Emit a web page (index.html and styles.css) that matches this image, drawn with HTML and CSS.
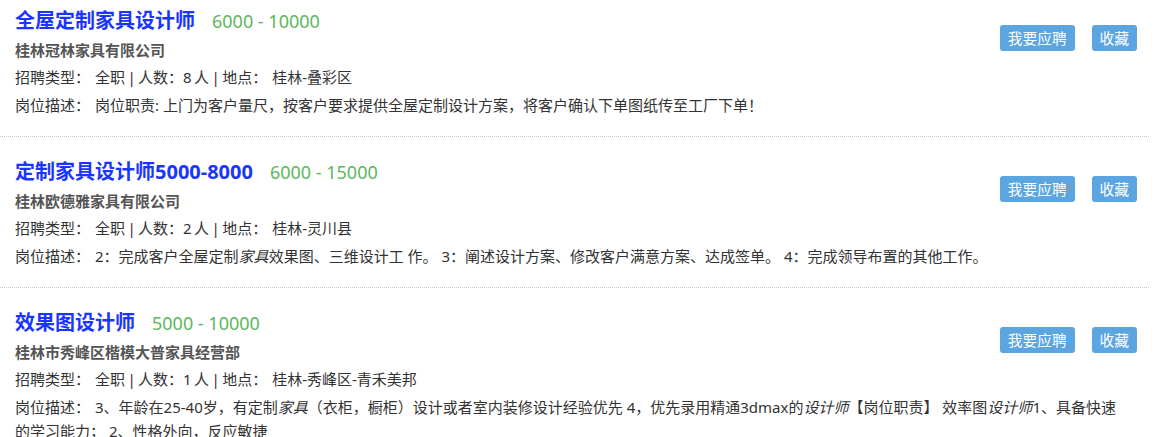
FILE: index.html
```html
<!DOCTYPE html>
<html lang="zh-CN">
<head>
    <meta charset="UTF-8">
    <meta name="viewport" content="width=device-width, initial-scale=1.0">
    <title>职位列表</title>
    <link rel="stylesheet" href="styles.css">
</head>
<body>
    <div class="job-list">
        <div class="job">
            <div class="job-btns">
                <button class="btn">我要应聘</button>
                <button class="btn">收藏</button>
            </div>
            <h2 class="job-title"><a href="#">全屋定制家具设计师</a><span class="salary">6000 - 10000</span></h2>
            <p class="company">桂林冠林家具有限公司</p>
            <p class="info"><span class="label">招聘类型：</span>全职 | 人数：8 人 | 地点：<span class="gap"></span>桂林-叠彩区</p>
            <p class="desc"><span class="label">岗位描述：</span>岗位职责: 上门为客户量尺，按客户要求提供全屋定制设计方案，将客户确认下单图纸传至工厂下单！</p>
        </div>

        <div class="job">
            <div class="job-btns">
                <button class="btn">我要应聘</button>
                <button class="btn">收藏</button>
            </div>
            <h2 class="job-title"><a href="#">定制家具设计师5000-8000</a><span class="salary">6000 - 15000</span></h2>
            <p class="company">桂林欧德雅家具有限公司</p>
            <p class="info"><span class="label">招聘类型：</span>全职 | 人数：2 人 | 地点：<span class="gap"></span>桂林-灵川县</p>
            <p class="desc"><span class="label">岗位描述：</span>2：完成客户全屋定制<em>家具</em>效果图、三维设计工 作。 3：阐述设计方案、修改客户满意方案、达成签单。 4：完成领导布置的其他工作。</p>
        </div>

        <div class="job">
            <div class="job-btns">
                <button class="btn">我要应聘</button>
                <button class="btn">收藏</button>
            </div>
            <h2 class="job-title"><a href="#">效果图设计师</a><span class="salary">5000 - 10000</span></h2>
            <p class="company">桂林市秀峰区楷模大普家具经营部</p>
            <p class="info"><span class="label">招聘类型：</span>全职 | 人数：1 人 | 地点：<span class="gap"></span>桂林-秀峰区-青禾美邦</p>
            <p class="desc"><span class="label">岗位描述：</span>3、年龄在25-40岁，有定制<em>家具</em>（衣柜，橱柜）设计或者室内装修设计经验优先 4，优先录用精通3dmax的<em>设计师</em>【岗位职责】 效率图<em>设计师</em>1、具备快速的学习能力； 2、性格外向，反应敏捷</p>
        </div>
    </div>
</body>
</html>
```

FILE: styles.css
```css
body { margin: 0; font-family: "Noto Sans", "Noto Sans CJK SC", "Microsoft YaHei", sans-serif; background: #fff; color: #333; }
.job-list { width: 1149px; }
.job { padding: 20px 12px 19px 15px; border-bottom: 1px dotted #c8c8c8; }
.job:first-child { padding-top: 6px; }
.job p { margin: 0; font-size: 15px; }

.job-title { margin: 0; font-size: 20px; line-height: 30px; font-weight: bold; }
.job-title a { color: #1a35ff; text-decoration: none; }
.salary { margin-left: 17px; font-size: 18px; font-weight: normal; color: #5cb85c; }

.company { line-height: 28px; font-weight: bold; color: #555; }
.info { line-height: 27px; word-spacing: -1.5px; }
.desc { margin: 2px 8px 0 0 !important; line-height: 24px; }
.desc em { font-style: italic; }
.label { margin-right: 5px; }
.gap { display: inline-block; width: 5px; }

.job-btns { float: right; margin-top: 19px; display: flex; gap: 17px; }
.btn {
    height: 26px;
    padding: 0 8px;
    border: none;
    border-radius: 3px;
    background: #5ba5e1;
    color: #fff;
    font-family: inherit;
    font-size: 14.7px;
    line-height: 26px;
    cursor: pointer;
}
.btn:hover { background: #4a93cf; }
```
